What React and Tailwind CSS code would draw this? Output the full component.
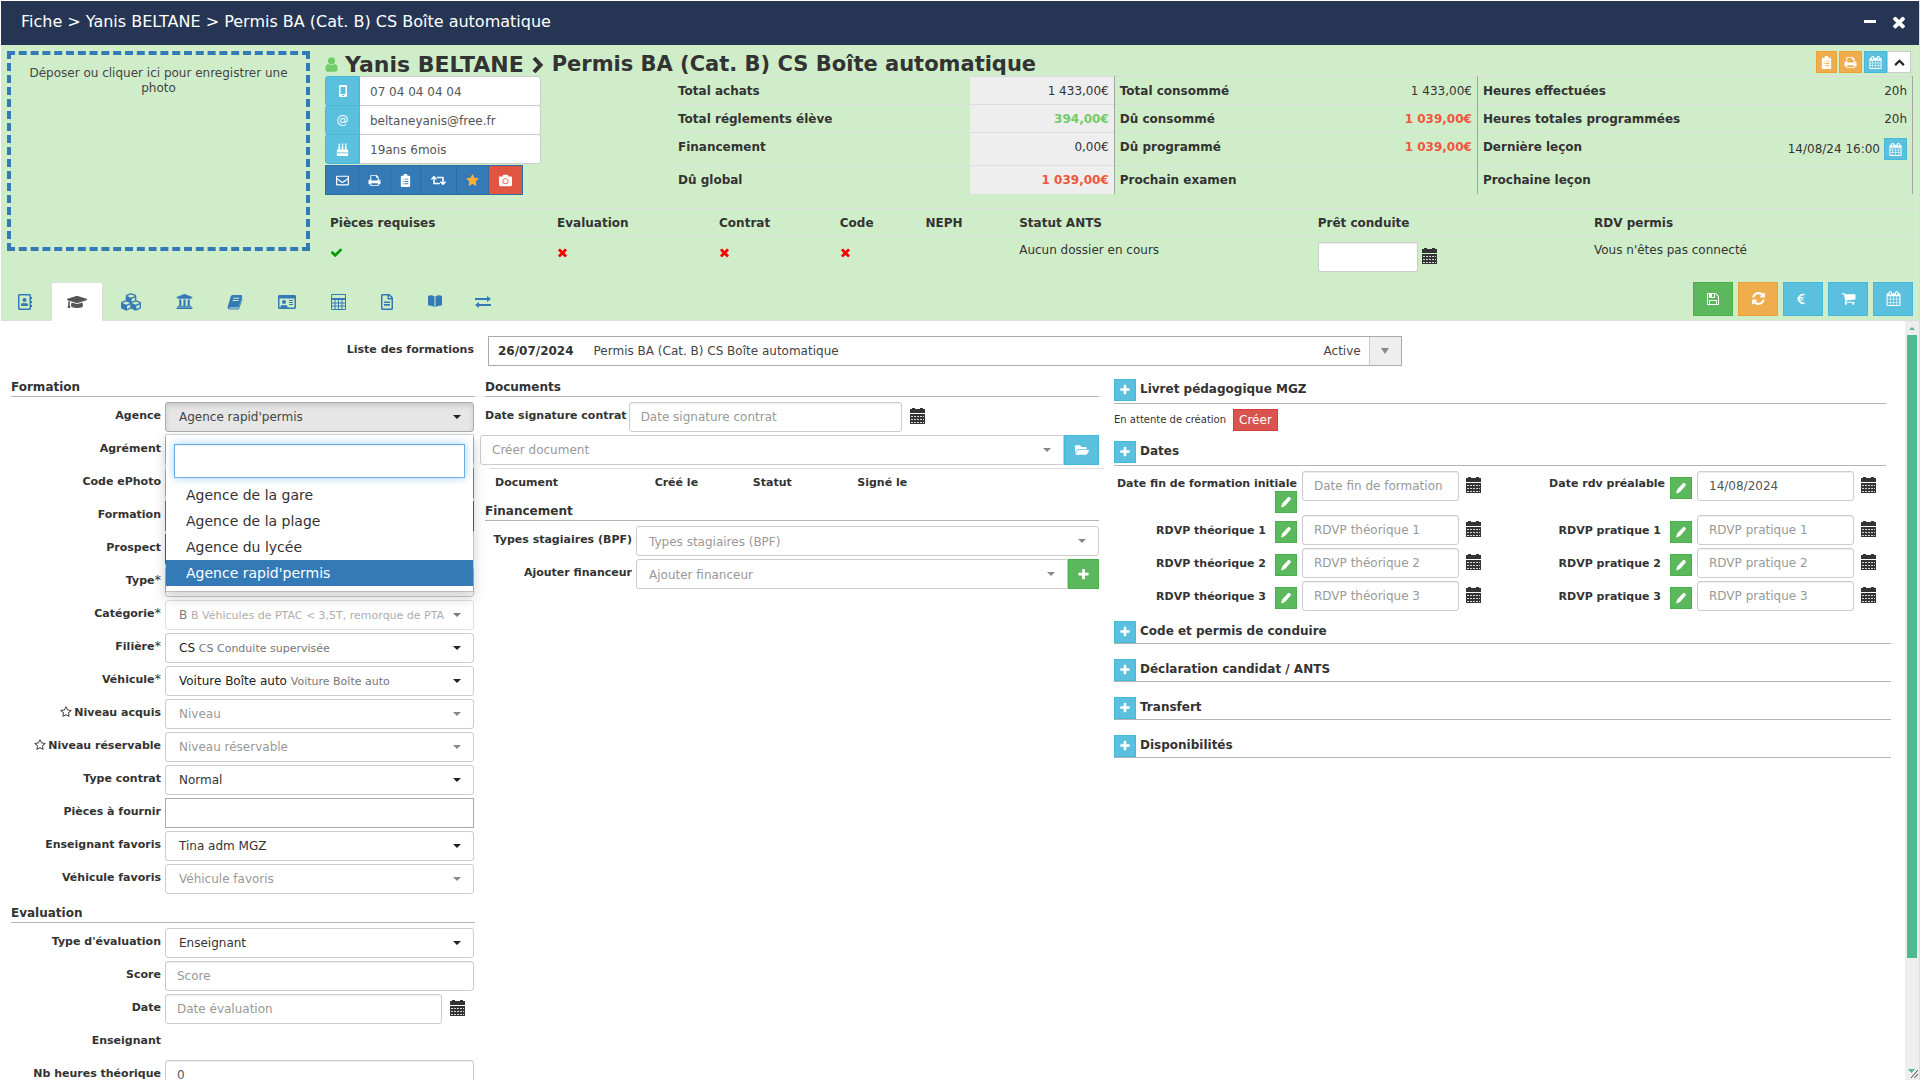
import React from "react";
import {
  FaGraduationCap, FaCubes, FaUniversity, FaRegIdCard, FaRegFileAlt, FaRegAddressBook,
  FaRegEnvelope, FaRetweet, FaCamera, FaBirthdayCake, FaFolderOpen, FaEuroSign,
} from "react-icons/fa";

const PATHS = {
  calendar: "M192 1664h288v-288h-288v288zm352 0h320v-288h-320v288zm-352-352h288v-320h-288v320zm352 0h320v-320h-320v320zm-352-384h288v-288h-288v288zm736 736h320v-288h-320v288zm-384-736h320v-288h-320v288zm768 736h288v-288h-288v288zm-384-352h320v-320h-320v320zm-352-864v-288q0-13-9.5-22.5t-22.5-9.5h-64q-13 0-22.5 9.5t-9.5 22.5v288q0 13 9.5 22.5t22.5 9.5h64q13 0 22.5-9.5t9.5-22.5zm736 864h288v-320h-288v320zm-384-384h320v-288h-320v288zm384 0h288v-288h-288v288zm32-480v-288q0-13-9.5-22.5t-22.5-9.5h-64q-13 0-22.5 9.5t-9.5 22.5v288q0 13 9.5 22.5t22.5 9.5h64q13 0 22.5-9.5t9.5-22.5zm384-64v1280q0 52-38 90t-90 38h-1408q-52 0-90-38t-38-90v-1280q0-52 38-90t90-38h128v-96q0-66 47-113t113-47h64q66 0 113 47t47 113v96h384v-96q0-66 47-113t113-47h64q66 0 113 47t47 113v96h128q52 0 90 38t38 90z",
  save: "M512 1536h768v-384h-768v384zm896 0h128v-896q0-14-10-38.5t-20-34.5l-281-281q-10-10-34-20t-39-10v416q0 40-28 68t-68 28h-576q-40 0-68-28t-28-68v-416h-128v1280h128v-416q0-40 28-68t68-28h832q40 0 68 28t28 68v416zm-384-928v-320q0-13-9.5-22.5t-22.5-9.5h-192q-13 0-22.5 9.5t-9.5 22.5v320q0 13 9.5 22.5t22.5 9.5h192q13 0 22.5-9.5t9.5-22.5zm640 32v928q0 40-28 68t-68 28h-1344q-40 0-68-28t-28-68v-1344q0-40 28-68t68-28h928q40 0 88 20t76 48l280 280q28 28 48 76t20 88z",
  refresh: "M1639 1056q0 5-1 7-64 268-268 434.5t-478 166.5q-146 0-282.5-55t-243.5-157l-129 129q-19 19-45 19t-45-19-19-45v-448q0-26 19-45t45-19h448q26 0 45 19t19 45-19 45l-137 137q71 66 161 102t187 36q134 0 250-65t186-179q11-17 53-117 8-23 30-23h192q13 0 22.5 9.5t9.5 22.5zm25-800v448q0 26-19 45t-45 19h-448q-26 0-45-19t-19-45 19-45l138-138q-148-137-349-137-134 0-250 65t-186 179q-11 17-53 117-8 23-30 23h-199q-13 0-22.5-9.5t-9.5-22.5v-7q65-268 270-434.5t480-166.5q146 0 284 55.5t245 156.5l130-129q19-19 45-19t45 19 19 45z",
  print: "M448 1536h896v-256h-896v256zm0-640h896v-384h-160q-40 0-68-28t-28-68v-160h-640v640zm1152 64q0-26-19-45t-45-19-45 19-19 45 19 45 45 19 45-19 19-45zm128 0v416q0 13-9.5 22.5t-22.5 9.5h-224v160q0 40-28 68t-68 28h-960q-40 0-68-28t-28-68v-160h-224q-13 0-22.5-9.5t-9.5-22.5v-416q0-79 56.5-135.5t135.5-56.5h64v-544q0-40 28-68t68-28h672q40 0 88 20t76 48l152 152q28 28 48 76t20 88v256h64q79 0 135.5 56.5t56.5 135.5z",
  cart: "M704 1536q0 52-38 90t-90 38-90-38-38-90 38-90 90-38 90 38 38 90zm896 0q0 52-38 90t-90 38-90-38-38-90 38-90 90-38 90 38 38 90zm128-1088v512q0 24-16.5 42.5t-40.5 21.5l-1044 122q13 60 13 70 0 16-24 64h920q26 0 45 19t19 45-19 45-45 19h-1024q-26 0-45-19t-19-45q0-11 8-31.5t16-36 21.5-40 15.5-29.5l-177-823h-204q-26 0-45-19t-19-45 19-45 45-19h256q16 0 28.5 6.5t19.5 15.5 13 24.5 8 26 5.5 29.5 4.5 26h1201q26 0 45 19t19 45z",
  times: "M1490 1322q0 40-28 68l-136 136q-28 28-68 28t-68-28l-294-294-294 294q-28 28-68 28t-68-28l-136-136q-28-28-28-68t28-68l294-294-294-294q-28-28-28-68t28-68l136-136q28-28 68-28t68 28l294 294 294-294q28-28 68-28t68 28l136 136q28 28 28 68t-28 68l-294 294 294 294q28 28 28 68z",
  check: "M1671 566q0 40-28 68l-724 724-136 136q-28 28-68 28t-68-28l-136-136-362-362q-28-28-28-68t28-68l136-136q28-28 68-28t68 28l294 295 656-657q28-28 68-28t68 28l136 136q28 28 28 68z",
  plus: "M1600 736v192q0 40-28 68t-68 28h-416v416q0 40-28 68t-68 28h-192q-40 0-68-28t-28-68v-416h-416q-40 0-68-28t-28-68v-192q0-40 28-68t68-28h416v-416q0-40 28-68t68-28h192q40 0 68 28t28 68v416h416q40 0 68 28t28 68z",
  star: "M1728 647q0 22-26 48l-363 354 86 500q1 7 1 20 0 21-10.5 35.5t-30.5 14.5q-19 0-40-12l-449-236-449 236q-22 12-40 12-21 0-31.5-14.5t-10.5-35.5q0-6 2-20l86-500-364-354q-25-27-25-48 0-37 56-46l502-73 225-455q19-41 49-41t49 41l225 455 502 73q56 9 56 46z",
  starO: "M1201 1004l306-297-422-62-189-382-189 382-422 62 306 297-73 421 378-199 377 199zm527-357q0 22-26 48l-363 354 86 500q1 7 1 20 0 50-41 50-19 0-40-12l-449-236-449 236q-22 12-40 12-21 0-31.5-14.5t-10.5-35.5q0-6 2-20l86-500-364-354q-25-27-25-48 0-37 56-46l502-73 225-455q19-41 49-41t49 41l225 455 502 73q56 9 56 46z",
  user: "M1536 1399q0 109-62.5 187t-150.5 78h-854q-88 0-150.5-78t-62.5-187q0-85 8.5-160.5t31.5-152 58.5-131 94-89 134.5-34.5q131 128 313 128t313-128q76 0 134.5 34.5t94 89 58.500 131 31.500 152 8.500 160.500zm-256-887q0 159-112.500 271.500t-271.500 112.500-271.500-112.500-112.500-271.500 112.500-271.500 271.500-112.500 271.500 112.500 112.500 271.500z",
};

function Icon({ name, size = 14, className = "" }) {
  return (
    <svg viewBox="0 0 1792 1792" width={size} height={size} fill="currentColor" className={`inline-block shrink-0 ${className}`} aria-hidden="true">
      <path d={PATHS[name]} />
    </svg>
  );
}

function Clipboard({ size = 13 }) {
  return (
    <svg viewBox="0 0 14 14" width={size} height={size} fill="currentColor" aria-hidden="true">
      <path fillRule="evenodd" d="M5 2V1a1 1 0 0 1 1-1h2a1 1 0 0 1 1 1v1h2a1 1 0 0 1 1 1v10a1 1 0 0 1-1 1H3a1 1 0 0 1-1-1V3a1 1 0 0 1 1-1zM4 5v1h1V5zm2 0v1h4V5zM4 7.500v1h1v-1zm2 0v1h4v-1zM4 10v1h1v-1zm2 0v1h4v-1z" />
    </svg>
  );
}

function DateIcon() {
  return (
    <svg viewBox="0 0 15 16" width="15" height="16" aria-hidden="true" className="block shrink-0 text-[#333]">
      <path fill="currentColor" d="M0 1h2V0h3v1h5V0h3v1h2v4H0zM0 6h15v10H0z" />
      <path stroke="#fff" strokeOpacity=".8" strokeWidth="1" fill="none" strokeDasharray="2 1" d="M1 8.500h13M1 11.500h13M1 14.500h13" />
    </svg>
  );
}

function DateButton({ label, className = "" }) {
  return (
    <button type="button" aria-label={`Calendrier ${label}`} className={`shrink-0 ${className}`}>
      <DateIcon />
    </button>
  );
}

function Pencil() {
  return (
    <svg viewBox="0 0 12 12" width="12" height="12" fill="currentColor" aria-hidden="true">
      <path d="M8 1.200a1.200 1.200 0 0 1 1.700 0l.8.8a1.200 1.200 0 0 1 0 1.700L5 9.900 2 11.200a.6.6 0 0 1-.8-.8L2.400 7.300z" />
    </svg>
  );
}

function Caret({ className = "" }) {
  return (
    <svg viewBox="0 0 8 4" width="8" height="4" fill="currentColor" aria-hidden="true" className={className}>
      <path d="M0 0h8L4 4z" />
    </svg>
  );
}

function TabBook() {
  return (
    <svg viewBox="0 0 16 16" width="16" height="16" fill="currentColor" aria-hidden="true">
      <path fillRule="evenodd" d="M5.500 1h8.500q1.500.2 1.200 1.600l-3.100 9.600q-.4 1.200-1.700 1.200H3q-1 0-.9.500t1 .5h7.700q.8 0 1.100-.8L15 4q.6.600.4 1.300l-3 9q-.5 1.300-1.700 1.300H2.800Q.700 15.500.5 13.400L3.700 2.500Q4.200 1.100 5.500 1zM6.400 3.800l-.3.900h6l.3-.9zM5.700 6l-.3.900h6l.3-.9z" />
    </svg>
  );
}

function TabCalculator() {
  return (
    <svg viewBox="0 0 15 16" width="15" height="16" aria-hidden="true" className="shrink-0">
      <path fill="none" stroke="currentColor" strokeWidth="1" d="M.5.5h14v15H.5zM.5 5.500h14M.5 9h14M.5 12h14M4 5.500v10M7.500 5.500v10M11 5.500v10" />
      <path fill="currentColor" d="M1 4h13v2H1z" />
    </svg>
  );
}

function TabOpenBook() {
  return (
    <svg viewBox="0 0 14 12" width="14" height="12" fill="currentColor" aria-hidden="true" className="mb-[2px] shrink-0">
      <path d="M0 1q3.500-1.500 6.500.5V12Q3.500 10 0 10.500zM14 1q-3.500-1.500-6.500.5V12q3-2 6.500-1.500z" />
    </svg>
  );
}

function TabExchange() {
  return (
    <svg viewBox="0 0 16 12" width="16" height="12" fill="currentColor" aria-hidden="true">
      <path d="M0 2h12V0l4 3-4 3V4H0zM16 8H4V6L0 9l4 3v-2h12z" />
    </svg>
  );
}

const CONTROL = "h-[30px] w-full min-w-0 rounded-[3px] border border-[#ccc] bg-white text-[12px]";

function Select({ id, value, muted, className = "" }) {
  return (
    <div className={`relative min-w-0 flex-1 ${className}`}>
      <select id={id} className={`${CONTROL} appearance-none pt-px pr-8 pl-[13px] ${muted ? "text-[#999]" : "text-[#333]"}`}>
        <option>{value}</option>
      </select>
      <Caret className={`pointer-events-none absolute top-[13px] right-[13px] ${muted ? "text-[#888]" : "text-[#222]"}`} />
    </div>
  );
}

function RichSelect({ id, main, sub, disabled }) {
  return (
    <button id={id} type="button" aria-haspopup="listbox" className={`${CONTROL} flex flex-1 items-center pt-px pr-3 pl-[13px] text-left text-[#222] ${disabled ? "opacity-60" : ""}`}>
      <span className="min-w-0 flex-1 whitespace-nowrap">
        {main} <small className="text-[11px] text-[#777]">{sub}</small>
      </span>
      <Caret className="ml-[6px] shrink-0" />
    </button>
  );
}

function TextInput({ id, placeholder, value, className = "" }) {
  return (
    <input id={id} type="text" placeholder={placeholder} defaultValue={value}
      className={`${CONTROL} px-[11px] pt-px text-[#555] shadow-[inset_0_1px_1px_rgba(0,0,0,0.075)] placeholder:text-[#999] ${className}`} />
  );
}

function Row({ id, label, star, required, children, labelWidth = "w-[150px]" }) {
  return (
    <div className="mb-[3px] flex h-[30px] gap-1">
      <label htmlFor={id} className={`${labelWidth} shrink-0 pt-[6px] text-right text-[11px] leading-4 font-bold whitespace-nowrap`}>
        {star && <Icon name="starO" size={12} className="mr-[2px] align-[-2px]" />}
        {label}
        {required && <span className="text-[13px] leading-none font-normal">*</span>}
      </label>
      {children}
    </div>
  );
}

function Heading({ children, className = "" }) {
  return <h2 className={`border-b border-[#b5b5b5] text-[12px] leading-[17px] font-bold ${className}`}>{children}</h2>;
}

function PlusHeading({ children, className = "" }) {
  return (
    <div className={`flex border-b border-[#b5b5b5] ${className}`}>
      <button type="button" aria-label={`Ouvrir ${children}`} className="flex size-[22px] items-center justify-center border border-[#46b8da] bg-[#5bc0de] text-white">
        <Icon name="plus" size={12} />
      </button>
      <h2 className="ml-1 text-[12px] leading-5 font-bold">{children}</h2>
    </div>
  );
}

function Agency() {
  const agencies = ["Agence de la gare", "Agence de la plage", "Agence du lycée", "Agence rapid'permis"];
  return (
    <div className="relative min-w-0 flex-1">
      <button id="agence" type="button" aria-haspopup="listbox" aria-expanded="true"
        className="flex h-[30px] w-full items-center justify-between rounded-[3px] border border-[#adadad] bg-[#e6e6e6] pt-px pr-3 pl-[13px] text-[12px] text-[#444] shadow-[inset_0_3px_5px_rgba(0,0,0,0.125)]">
        Agence rapid&apos;permis
        <Caret className="text-[#222]" />
      </button>
      <div className="absolute top-8 right-0 left-0 z-10 border border-black/15 bg-white bg-clip-padding pt-[9px] pb-[5px] shadow-[0_6px_12px_rgba(0,0,0,0.175)]">
        <div className="px-2">
          <input type="text" aria-label="Rechercher une agence"
            className="block h-[34px] w-full border border-[#66afe9] bg-white px-3 text-[14px] shadow-[inset_0_1px_1px_rgba(0,0,0,0.075),0_0_8px_rgba(102,175,233,0.6)]" />
        </div>
        <ul role="listbox" aria-label="Agences" className="mt-1">
          {agencies.map((a, i) => (
            <li key={a} role="option" aria-selected={i === 3}
              className={`pl-5 text-[14px] leading-[26px] ${i === 3 ? "bg-[#337ab7] text-white" : "text-[#333]"}`}>
              {a}
            </li>
          ))}
        </ul>
      </div>
    </div>
  );
}

function FormationColumn() {
  return (
    <section className="min-w-0">
      <Heading>Formation</Heading>
      <div className="pt-[5px] pr-px">
        <Row id="agence" label="Agence"><Agency /></Row>
        <Row id="agrement" label="Agrément"><Select id="agrement" value="" /></Row>
        <Row id="ephoto" label="Code ePhoto">
          <div className="flex flex-1">
            <TextInput id="ephoto" />
            <button type="button" aria-label="Envoyer" className="w-[34px] shrink-0 border border-[#46b8da] bg-[#5bc0de]" />
          </div>
        </Row>
        <Row id="formation" label="Formation">
          <div className="flex flex-1 justify-between">
            <button id="formation" type="button" aria-label="Valider" className="w-[34px] border border-[#4cae4c] bg-[#5cb85c]" />
            <button type="button" aria-label="Supprimer" className="w-[34px] border border-[#d43f3a] bg-[#d9534f]" />
          </div>
        </Row>
        <Row id="prospect" label="Prospect">
          <button id="prospect" type="button" aria-label="Prospect" className="w-[34px] border border-[#d43f3a] bg-[#d9534f]" />
        </Row>
        <Row id="type" label="Type" required><Select id="type" value="" /></Row>
        <Row id="categorie" label="Catégorie" required>
          <RichSelect id="categorie" main="B" sub="B Véhicules de PTAC < 3,5T, remorque de PTA" disabled />
        </Row>
        <Row id="filiere" label="Filière" required><RichSelect id="filiere" main="CS" sub="CS Conduite supervisée" /></Row>
        <Row id="vehicule" label="Véhicule" required><RichSelect id="vehicule" main="Voiture Boîte auto" sub="Voiture Boîte auto" /></Row>
        <Row id="niveau" label="Niveau acquis" star><Select id="niveau" value="Niveau" muted /></Row>
        <Row id="reservable" label="Niveau réservable" star><Select id="reservable" value="Niveau réservable" muted /></Row>
        <Row id="contrat" label="Type contrat"><Select id="contrat" value="Normal" /></Row>
        <Row id="pieces" label="Pièces à fournir">
          <input id="pieces" type="text" className="h-[30px] min-w-0 flex-1 border border-[#aaa] bg-white px-2 text-[12px]" />
        </Row>
        <Row id="enseignant-fav" label="Enseignant favoris"><Select id="enseignant-fav" value="Tina adm MGZ" /></Row>
        <Row id="vehicule-fav" label="Véhicule favoris"><Select id="vehicule-fav" value="Véhicule favoris" muted /></Row>
      </div>
      <Heading className="mt-[11px]">Evaluation</Heading>
      <div className="pt-[5px] pr-px">
        <Row id="type-eval" label="Type d'évaluation"><Select id="type-eval" value="Enseignant" /></Row>
        <Row id="score" label="Score"><TextInput id="score" placeholder="Score" /></Row>
        <Row id="date-eval" label="Date">
          <TextInput id="date-eval" placeholder="Date évaluation" />
          <DateButton label="évaluation" className="mr-[9px] ml-1 self-start pt-[6px]" />
        </Row>
        <div className="mb-[3px] h-[30px] w-[150px] pt-[6px] text-right text-[11px] leading-4 font-bold">Enseignant</div>
        <Row id="heures" label="Nb heures théorique"><TextInput id="heures" value="0" /></Row>
      </div>
    </section>
  );
}

function DocumentsColumn() {
  return (
    <section className="min-w-0">
      <Heading>Documents</Heading>
      <div className="pt-[5px]">
        <div className="mb-[3px] flex h-[30px]">
          <label htmlFor="signature" className="mr-[2px] pt-[6px] text-[11px] leading-4 font-bold whitespace-nowrap">Date signature contrat</label>
          <div className="w-[273px]"><TextInput id="signature" placeholder="Date signature contrat" className="px-[10px]" /></div>
          <DateButton label="signature" className="ml-2 self-start pt-[6px]" />
        </div>
        <div className="-ml-[5px] flex">
          <Select id="creer-doc" value="Créer document" muted className="[&>select]:rounded-r-none [&>select]:pl-[11px]" />
          <button type="button" aria-label="Ouvrir un document" className="flex h-[30px] w-[35px] items-center justify-center border border-[#46b8da] bg-[#5bc0de] text-white">
            <FaFolderOpen size={14} />
          </button>
        </div>
      </div>
      <table className="mt-[3px] -mr-[5px] ml-[5px] w-full table-fixed border-t border-[#ddd] text-left text-[11px]">
        <thead>
          <tr className="h-[29px]">
            <th className="w-[26%] pl-[5px]">Document</th>
            <th className="w-[16%] pl-[5px]">Créé le</th>
            <th className="w-[17%] pl-[5px]">Statut</th>
            <th className="pl-[5px]">Signé le</th>
          </tr>
        </thead>
      </table>
      <Heading className="mt-[6px]">Financement</Heading>
      <div className="pt-[5px]">
        <Row id="bpf" label="Types stagiaires (BPF)" labelWidth="w-[147px]"><Select id="bpf" value="Types stagiaires (BPF)" muted className="[&>select]:pl-3" /></Row>
        <Row id="financeur" label="Ajouter financeur" labelWidth="w-[147px]">
          <div className="flex flex-1">
            <Select id="financeur" value="Ajouter financeur" muted className="[&>select]:rounded-r-none [&>select]:pl-3" />
            <button type="button" aria-label="Ajouter" className="flex w-[31px] items-center justify-center border border-[#4cae4c] bg-[#5cb85c] text-white">
              <Icon name="plus" size={13} />
            </button>
          </div>
        </Row>
      </div>
    </section>
  );
}

function EditButton({ label, className = "" }) {
  return (
    <button type="button" aria-label={`Modifier ${label}`} className={`flex size-[22px] shrink-0 items-center justify-center border border-[#4cae4c] bg-[#5cb85c] text-white ${className}`}>
      <Pencil />
    </button>
  );
}

function DateField({ id, label, placeholder, value, tall, low }) {
  return (
    <div className={`flex min-w-0 items-start ${low ? "h-[41px]" : "h-[30px]"}`}>
      <div className={`flex w-[183px] shrink-0 justify-end ${tall ? "flex-col items-end" : "items-start"}`}>
        <label htmlFor={id} className={`text-[11px] font-bold whitespace-nowrap ${tall ? "pt-[6px] leading-[14px]" : low ? "pt-[5px] pr-[5px] leading-4" : "pt-2 pr-[9px] leading-4"}`}>{label}</label>
        <EditButton label={label} className={tall ? "" : "mt-[6px]"} />
      </div>
      <div className="ml-[5px] w-[157px]"><TextInput id={id} placeholder={placeholder || label} value={value} /></div>
      <DateButton label={label} className="mt-[6px] ml-[7px]" />
    </div>
  );
}

function RightColumn() {
  return (
    <section className="min-w-0 pl-[5px]">
      <div className="mr-[5px]">
        <PlusHeading className="pb-[2px]">Livret pédagogique MGZ</PlusHeading>
        <div className="flex items-start py-[5px]">
          <span className="pt-1 text-[10px] leading-[14px]">En attente de création</span>
          <button type="button" className="ml-[7px] h-[22px] border border-[#d43f3a] bg-[#d9534f] px-[5px] text-[12px] leading-5 text-white">Créer</button>
        </div>
        <PlusHeading className="mt-[5px] pb-[2px]">Dates</PlusHeading>
        <div className="grid grid-cols-[395fr_377fr] gap-y-[3px] pt-[5px]">
          <DateField id="fin" label="Date fin de formation initiale" tall low />
          <DateField id="rdv" label="Date rdv préalable" value="14/08/2024" low />
          {[1, 2, 3].map((n) => (
            <React.Fragment key={n}>
              <DateField id={`theo${n}`} label={`RDVP théorique ${n}`} />
              <DateField id={`prat${n}`} label={`RDVP pratique ${n}`} />
            </React.Fragment>
          ))}
        </div>
      </div>
      <PlusHeading className="mt-[10px]">Code et permis de conduire</PlusHeading>
      <PlusHeading className="mt-[15px]">Déclaration candidat / ANTS</PlusHeading>
      <PlusHeading className="mt-[15px]">Transfert</PlusHeading>
      <PlusHeading className="mt-[15px]">Disponibilités</PlusHeading>
    </section>
  );
}

function Contact({ icon, label, value }) {
  return (
    <div className="-mb-px flex h-[30px]">
      <span className="flex w-[35px] shrink-0 items-center justify-center rounded-l-[3px] border border-[#46b8da] bg-[#5bc0de] text-[12px] text-white">{icon}</span>
      <input type="text" aria-label={label} defaultValue={value} className="min-w-0 flex-1 rounded-r-[3px] border border-l-0 border-[#ccc] bg-white px-[10px] pt-px text-[12px] text-[#555]" />
    </div>
  );
}

const TD = "px-[5px] align-top leading-[17px] pt-[6px]";

function Totals() {
  const rows = [
    ["Total achats", "1 433,00€", "", "Total consommé", "1 433,00€", "", "Heures effectuées", "20h"],
    ["Total réglements élève", "394,00€", "font-bold text-[#72cc67]", "Dû consommé", "1 039,00€", "font-bold text-[#f0563d]", "Heures totales programmées", "20h"],
    ["Financement", "0,00€", "", "Dû programmé", "1 039,00€", "font-bold text-[#f0563d]", "Dernière leçon", "14/08/24 16:00"],
    ["Dû global", "1 039,00€", "font-bold text-[#f0563d]", "Prochain examen", "", "", "Prochaine leçon", ""],
  ];
  return (
    <table className="w-full flex-1 table-fixed border-collapse text-[12px]">
      <tbody>
        {rows.map((r, i) => (
          <tr key={r[0]} className={`border-t border-[#ddd] ${i === 2 ? "h-[33px]" : "h-7"}`}>
            <th className={`${TD} w-[24%] text-left`}>{r[0]}</th>
            <td className={`${TD} w-[11.6%] border-r border-[#a5a5a5] bg-[#eee] text-right ${r[2]}`}>{r[1]}</td>
            <th className={`${TD} w-[15%] text-left`}>{r[3]}</th>
            <td className={`${TD} w-[14.3%] border-r border-[#a5a5a5] text-right ${r[5]}`}>{r[4]}</td>
            <th className={`${TD} w-[20%] text-left`}>{r[6]}</th>
            <td className="border-r border-[#a5a5a5] px-[5px] pt-[5px] text-right align-top leading-[17px]">
              {i === 2 ? (
                <span className="flex items-center justify-end gap-1">
                  {r[7]}
                  <button type="button" aria-label="Planning" className="flex h-[22px] w-[23px] items-center justify-center border border-[#46b8da] bg-[#5bc0de] text-white">
                    <Icon name="calendar" size={13} />
                  </button>
                </span>
              ) : <span className="block pt-px">{r[7]}</span>}
            </td>
          </tr>
        ))}
      </tbody>
    </table>
  );
}

function Status() {
  const bad = <Icon name="times" size={13} className="-ml-px block text-[#f00]" />;
  const cols = [
    ["Pièces requises", "w-[14.3%]", <Icon name="check" size={13} className="block text-[#009a00]" />],
    ["Evaluation", "w-[10.2%]", bad],
    ["Contrat", "w-[7.6%]", bad],
    ["Code", "w-[5.4%]", bad],
    ["NEPH", "w-[5.9%]", null],
    ["Statut ANTS", "w-[18.8%]", "Aucun dossier en cours"],
    ["Prêt conduite", "w-[17.4%]", (
      <span className="flex items-start gap-1">
        <input type="text" aria-label="Prêt conduite" className="h-[30px] w-[100px] rounded-[2px] border border-[#ccc] bg-white px-2 shadow-[inset_0_1px_1px_rgba(0,0,0,0.075)]" />
        <DateButton label="prêt conduite" className="pt-[6px]" />
      </span>
    )],
    ["RDV permis", "", "Vous n'êtes pas connecté"],
  ];
  return (
    <table className="mt-[13px] w-full table-fixed border-collapse text-left text-[12px]">
      <thead>
        <tr className="h-7 border-t border-[#ddd]">
          {cols.map((c) => <th key={c[0]} className={`${TD} ${c[1]}`}>{c[0]}</th>)}
        </tr>
      </thead>
      <tbody>
        <tr className="h-[42px] border-t border-[#ddd]">
          {cols.map((c) => <td key={c[0]} className="px-[5px] pt-[5px] align-top leading-[17px] first:pt-[7px] [&:has(>svg)]:pt-[7px]">{c[2]}</td>)}
        </tr>
      </tbody>
    </table>
  );
}

function Tabs() {
  const tabs = [
    ["Identité", <FaRegAddressBook size={16} />, "w-12"],
    ["Formation", <FaGraduationCap size={20} />, "w-[52px]"],
    ["Forfaits", <FaCubes size={20} />, "w-[52px]"],
    ["Comptes", <FaUniversity size={17} />, "w-[50px]"],
    ["Leçons", <TabBook />, "w-12"],
    ["Carte", <FaRegIdCard size={18} />, "w-[52px]"],
    ["Calculs", <TabCalculator />, "w-[46px]"],
    ["Documents", <FaRegFileAlt size={16} />, "w-12"],
    ["Livret", <TabOpenBook />, "w-11"],
    ["Transferts", <TabExchange />, "w-12"],
  ];
  const actions = [
    ["Enregistrer", "border-[#4cae4c] bg-[#5cb85c]", <Icon name="save" size={14} />],
    ["Actualiser", "border-[#eea236] bg-[#f0ad4e]", <Icon name="refresh" size={15} />],
    ["Règlement", "border-[#46b8da] bg-[#5bc0de]", <FaEuroSign size={12} className="mr-1" />],
    ["Panier", "border-[#46b8da] bg-[#5bc0de]", <Icon name="cart" size={15} />],
    ["Planning", "border-[#46b8da] bg-[#5bc0de]", <Icon name="calendar" size={15} />],
  ];
  return (
    <div className="flex items-start justify-between border-b border-[#ddd] pt-[3px]">
      <nav className="-mb-px flex gap-[2px]">
        {tabs.map(([name, icon, w], i) => (
          <a key={name} href="#" aria-label={name}
            className={`flex h-[39px] items-center justify-center border pt-px ${w} ${i === 1 ? "border-[#ddd] border-b-white bg-white text-[#555]" : "border-transparent text-[#337ab7]"}`}>
            {icon}
          </a>
        ))}
      </nav>
      <div className="flex gap-[5px] pr-[6px]">
        {actions.map(([name, c, icon]) => (
          <button key={name} type="button" aria-label={name} className={`flex h-[34px] w-10 items-center justify-center border text-white ${c}`}>{icon}</button>
        ))}
      </div>
    </div>
  );
}

function Header() {
  const tools = [
    ["E-mail", <FaRegEnvelope size={13} />, "w-[33px]"],
    ["Imprimer", <Icon name="print" size={13} />, "w-8"],
    ["Presse-papiers", <Clipboard />, "w-[30px]"],
    ["Transférer", <FaRetweet size={15} />, "w-9"],
    ["Favori", <Icon name="star" size={13} className="text-[#fbb034]" />, "w-8"],
  ];
  return (
    <header className="bg-[#d0edca]">
      <div className="flex gap-[15px] pt-[6px] pr-[6px] pl-[6px]">
        <button type="button" className="flex h-[200px] w-[303px] shrink-0 items-start justify-center border-4 border-dashed border-[#337ab7] px-3 pt-[11px] text-center text-[12px] leading-[15px] text-[#444]">
          Déposer ou cliquer ici pour enregistrer une photo
        </button>
        <div className="min-w-0 flex-1">
          <div className="flex h-[25px] justify-between">
            <h1 className="flex items-center pt-[2px] text-[22px] leading-[25px] font-bold whitespace-nowrap text-[#333]">
              <Icon name="user" size={17} className="-ml-[2px] mr-[5px] text-[#72cc67]" />
              Yanis BELTANE
              <svg viewBox="0 0 12 16" width="12" height="16" fill="none" stroke="currentColor" strokeWidth="4" className="mx-2" aria-hidden="true"><path d="M2 1l6.500 7L2 15" /></svg>
              <span className="text-[21px]">Permis BA (Cat. B) CS Boîte automatique</span>
            </h1>
            <div className="flex h-[22px] pr-[2px] text-white">
              <button type="button" aria-label="Dossier" className="mr-[2px] flex w-[21px] items-center justify-center border border-[#eea236] bg-[#f0ad4e]"><Clipboard /></button>
              <button type="button" aria-label="Imprimer la fiche" className="mr-[2px] flex w-[23px] items-center justify-center border border-[#eea236] bg-[#f0ad4e]"><Icon name="print" size={13} /></button>
              <button type="button" aria-label="Calendrier" className="flex w-[23px] items-center justify-center border border-[#46b8da] bg-[#5bc0de]"><Icon name="calendar" size={13} /></button>
              <button type="button" aria-label="Replier" className="flex w-6 items-center justify-center border border-[#ccc] bg-white text-[#222]">
                <svg viewBox="0 0 12 8" width="11" height="7" fill="none" stroke="currentColor" strokeWidth="2.500" aria-hidden="true"><path d="M1 7l5-5 5 5" /></svg>
              </button>
            </div>
          </div>
          <div className="flex items-start">
            <div className="mr-[132px] w-[216px] shrink-0">
              <Contact label="Téléphone" value="07 04 04 04 04" icon={
                <svg viewBox="0 0 8 12" width="8" height="12" fill="currentColor" aria-hidden="true"><path fillRule="evenodd" d="M1 0h6q1 0 1 1v10q0 1-1 1H1q-1 0-1-1V1q0-1 1-1zm.5 2v7h5V2zM3 10v1h2v-1z" /></svg>
              } />
              <Contact label="E-mail" value="beltaneyanis@free.fr" icon="@" />
              <Contact label="Âge" value="19ans 6mois" icon={<FaBirthdayCake size={13} />} />
              <div className="mt-[2px] flex h-[30px] w-[198px] border border-r-0 border-[#2e6da4] bg-[#337ab7] text-white">
                {tools.map(([n, icon, w]) => (
                  <button key={n} type="button" aria-label={n} className={`flex items-center justify-center border-r border-[#2e6da4] ${w}`}>{icon}</button>
                ))}
                <button type="button" aria-label="Photo" className="flex flex-1 items-center justify-center border-r border-[#2e6da4] bg-[#df553f]"><FaCamera size={13} /></button>
              </div>
            </div>
            <Totals />
          </div>
          <Status />
        </div>
      </div>
      <Tabs />
    </header>
  );
}

export default function App() {
  return (
    <div className="flex h-screen flex-col overflow-hidden border-t border-r border-l border-t-white border-r-[#ddd] border-l-white bg-white font-['DejaVu_Sans',Verdana,sans-serif] text-[#333]">
      <div className="flex h-11 shrink-0 items-center justify-between bg-[#263553] pr-[11px] pb-[3px] pl-5 text-white">
        <span className="text-[16px] whitespace-nowrap">Fiche &gt; Yanis BELTANE &gt; Permis BA (Cat. B) CS Boîte automatique</span>
        <div className="flex items-center gap-[14px]">
          <button type="button" aria-label="Réduire" className="h-[3px] w-3 bg-white" />
          <button type="button" aria-label="Fermer" className="flex"><Icon name="times" size={18} /></button>
        </div>
      </div>
      <Header />
      <div className="flex min-h-0 flex-1">
        <main className="min-w-0 flex-1 overflow-hidden pr-[14px] pl-[10px]">
          <div className="flex pt-[15px]">
            <label htmlFor="formations" className="w-[463px] shrink-0 pt-[6px] text-right text-[11px] leading-4 font-bold">Liste des formations</label>
            <button id="formations" type="button" aria-haspopup="listbox" className="ml-[14px] flex h-[30px] w-[48.6%] items-center border border-[#aaa] bg-white pl-[9px] text-[12px] text-[#444]">
              <b className="mr-5 text-[#333]">26/07/2024</b>
              <span className="flex-1 text-left">Permis BA (Cat. B) CS Boîte automatique</span>
              <span className="mr-2">Active</span>
              <span className="flex h-full w-8 items-center justify-center border-l border-[#ccc] bg-[#eee] text-[#888]">
                <svg viewBox="0 0 8 6" width="8" height="6" fill="currentColor" aria-hidden="true"><path d="M0 0h8L4 6z" /></svg>
              </span>
            </button>
          </div>
          <div className="mt-[13px] grid grid-cols-[464fr_614fr_782fr] gap-[10px]">
            <FormationColumn />
            <DocumentsColumn />
            <RightColumn />
          </div>
        </main>
        <div aria-hidden="true" className="flex w-[14px] shrink-0 flex-col items-center justify-between bg-[#eee] pt-[6px] pb-[2px] text-[#4fb992]">
          <svg viewBox="0 0 6 3" width="6" height="3" fill="currentColor"><path d="M3 0l3 3H0z" /></svg>
          <div className="mt-[5px] h-[83%] w-[10px] bg-[#4fb992]" />
          <div className="flex-1" />
          <svg viewBox="0 0 12 10" width="12" height="10"><path fill="#4fb992" d="M2 1h7L5.500 5z" /><path stroke="#444" d="M5 10l7-8M8.500 10L12 6" /></svg>
        </div>
      </div>
    </div>
  );
}
